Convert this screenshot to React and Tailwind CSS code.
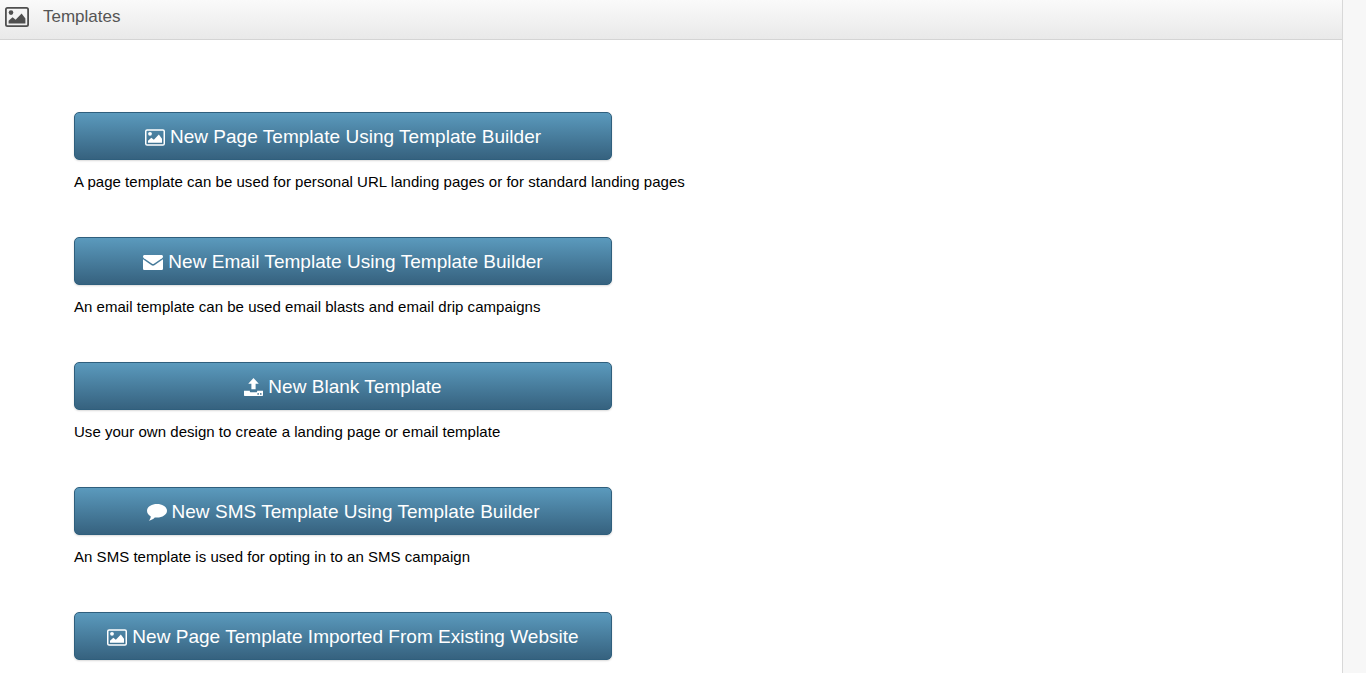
const ImageIcon = ({ className }) => (
  <svg viewBox="0 0 24 20" className={className} fill="currentColor">
    <path fillRule="evenodd" d="M2.5 0h19A2.5 2.5 0 0 1 24 2.5v15a2.5 2.5 0 0 1-2.5 2.5h-19A2.5 2.5 0 0 1 0 17.5v-15A2.5 2.5 0 0 1 2.5 0zm0 1.800a.7.7 0 0 0-.7.7v15c0 .4.3.7.7.7h19c.4 0 .7-.3.7-.7v-15a.7.7 0 0 0-.7-.7z" />
    <circle cx="6" cy="5.600" r="2.300" />
    <path d="M3.600 16.400v-2.600l4-3.600 3 2.600 6-6.400 3.800 5v5z" />
  </svg>
);

const MailIcon = ({ className }) => (
  <svg viewBox="0 0 20 15" className={className} fill="currentColor">
    <path d="M1.600 0h16.800c1 0 1.600.7 1.600 1.500 0 .7-.5 1.300-1 1.700l-8.100 5.600c-.6.4-1.200.4-1.800 0L1 3.200C.5 2.800 0 2.200 0 1.500 0 .7.6 0 1.600 0z" />
    <path d="M0 4.200l8.600 6c.9.6 1.900.6 2.800 0l8.600-6v9.200c0 .9-.7 1.600-1.600 1.600H1.600C.7 15 0 14.300 0 13.400z" />
  </svg>
);

const UploadIcon = ({ className }) => (
  <svg viewBox="0 0 18 17" className={className} fill="currentColor">
    <path fillRule="evenodd" d="M9 0l5 5.400h-3v5.200H7V5.400H4z" />
    <path fillRule="evenodd" d="M0 12h5.500v.6c0 .5.400.9.900.9h5.200c.5 0 .9-.4.900-.9V12H18v4.200c0 .4-.4.8-.8.8H.8c-.4 0-.8-.4-.8-.8zm13.400 2.300a.8.8 0 1 0 0 1.600.8.8 0 0 0 0-1.600zm2.500 0a.8.8 0 1 0 0 1.600.8.8 0 0 0 0-1.600z" />
  </svg>
);

const ChatIcon = ({ className }) => (
  <svg viewBox="0 0 20 17" className={className} fill="currentColor">
    <path d="M10 0c5.500 0 10 3 10 6.800s-4.500 6.800-10 6.800c-.8 0-1.500-.1-2.200-.2C6.300 15 4 16.300 1.800 16.700c1-1.100 1.800-2.500 2-4.300C1.500 11.200 0 9.100 0 6.800 0 3 4.500 0 10 0z" />
  </svg>
);

const templates = [
  {
    label: 'New Page Template Using Template Builder',
    hint: 'A page template can be used for personal URL landing pages or for standard landing pages',
    icon: <ImageIcon className="w-5 h-[17px]" />,
  },
  {
    label: 'New Email Template Using Template Builder',
    hint: 'An email template can be used email blasts and email drip campaigns',
    icon: <MailIcon className="w-5 h-[15px]" />,
  },
  {
    label: 'New Blank Template',
    hint: 'Use your own design to create a landing page or email template',
    icon: <UploadIcon className="w-[19px] h-[18px]" />,
  },
  {
    label: 'New SMS Template Using Template Builder',
    hint: 'An SMS template is used for opting in to an SMS campaign',
    icon: <ChatIcon className="w-5 h-[17px]" />,
  },
  {
    label: 'New Page Template Imported From Existing Website',
    icon: <ImageIcon className="w-5 h-[17px]" />,
  },
];

export default function App() {
  return (
    <div className="flex h-[673px] overflow-hidden bg-[#f7f7f7] font-['Liberation_Sans',Arial,sans-serif]">
      <div className="w-[1343px] shrink-0 bg-white border-r border-[#d8d8d8]">
        {/* Title bar */}
        <div className="flex items-center h-10 pl-[5px] pb-[5px] bg-gradient-to-b from-[#fafafa] to-[#e9e9e9] border-b border-[#d4d4d4]">
          <ImageIcon className="w-6 h-5 text-[#4f4f4f]" />
          <span className="ml-[14px] text-[17px] text-[#555]">Templates</span>
        </div>

        <div className="pt-[72px] pl-[74px]">
          {templates.map((t) => (
            <div key={t.label} className="h-[125px]">
              <button className="flex items-center justify-center gap-[5px] w-[538px] h-12 pt-[2px] rounded-[5px] border border-[#2f5f7d] bg-gradient-to-b from-[#5b9abd] to-[#36627f] text-white text-[19px] tracking-[0.03px] shadow-[0_1px_2px_rgba(0,0,0,0.15)]">
                {t.icon}
                {t.label}
              </button>
              <p className="mt-3 text-[15px] tracking-[0.03px] leading-5 text-black">{t.hint}</p>
            </div>
          ))}
        </div>
      </div>
    </div>
  );
}
